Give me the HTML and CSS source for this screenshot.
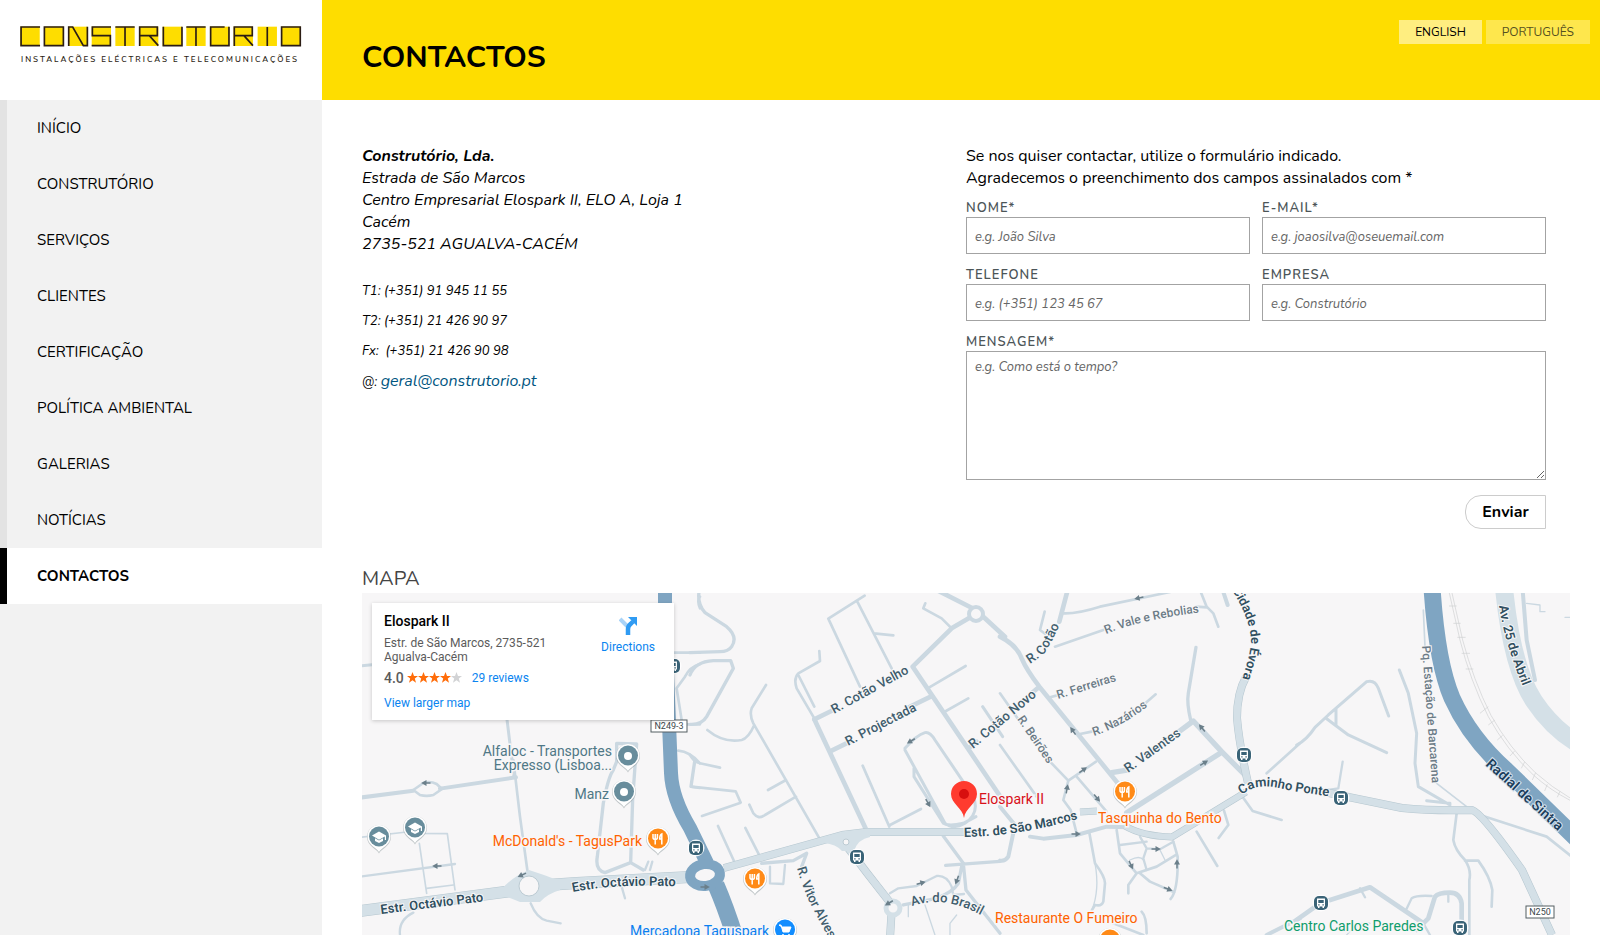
FILE: index.html
```html
<!DOCTYPE html>
<html lang="pt">
<head>
<meta charset="utf-8">
<title>Contactos - Construtório</title>
<link rel="stylesheet" href="styles.css">
</head>
<body>
<div class="page">
  <aside class="sidebar">
    <a class="brand" href="#" aria-label="Construtório">
      <svg class="brand-mark" viewBox="0 0 846 62" aria-hidden="true">
        <g fill="#fedd00">
          <rect x="1" y="2" width="58" height="58"/><rect x="72" y="2" width="58" height="58"/><rect x="144" y="2" width="58" height="58"/><rect x="215" y="2" width="58" height="58"/><rect x="286" y="2" width="58" height="58"/><rect x="357" y="2" width="58" height="58"/><rect x="428" y="2" width="58" height="58"/><rect x="499" y="2" width="58" height="58"/><rect x="570" y="2" width="58" height="58"/><rect x="641" y="2" width="58" height="58"/><rect x="713" y="2" width="58" height="58"/><rect x="784" y="2" width="58" height="58"/>
        </g>
        <g fill="none" stroke="#2b1d14" stroke-width="5">
          <path d="M60 3H3V59H60M73 3H130V59H73ZM146 60V3H158L190 59H202V2M273 3H217V29H271V59H215M286 3H344M315 3V60M359 60V3H412V29H359M388 29L415 59M430 2V59H486V2M499 3H557M528 3V60M614 3H572V59H627V2M643 60V3H697V29H643M672 29L699 59M742 3V60M785 3H841V59H785Z"/>
        </g>
      </svg>
      <span class="brand-line">INSTALAÇÕES ELÉCTRICAS E TELECOMUNICAÇÕES</span>
    </a>
    <nav class="menu">
      <a class="menu-item" href="#">INÍCIO</a>
      <a class="menu-item" href="#">CONSTRUTÓRIO</a>
      <a class="menu-item" href="#">SERVIÇOS</a>
      <a class="menu-item" href="#">CLIENTES</a>
      <a class="menu-item" href="#">CERTIFICAÇÃO</a>
      <a class="menu-item" href="#">POLÍTICA AMBIENTAL</a>
      <a class="menu-item" href="#">GALERIAS</a>
      <a class="menu-item" href="#">NOTÍCIAS</a>
      <a class="menu-item is-active" href="#" aria-current="page">CONTACTOS</a>
    </nav>
  </aside>

  <main class="main">
    <header class="banner">
      <h1 class="banner-title">CONTACTOS</h1>
      <nav class="langs">
        <a class="lang is-active" href="#">ENGLISH</a>
        <a class="lang" href="#">PORTUGUÊS</a>
      </nav>
    </header>

    <div class="content">
      <div class="columns">
        <address class="address">
          <p class="lines"><strong>Construtório, Lda.</strong><br>Estrada de São Marcos<br>Centro Empresarial Elospark II, ELO A, Loja 1<br>Cacém<br>2735-521 AGUALVA-CACÉM</p>
          <p class="phone">T1: (+351) 91 945 11 55</p>
          <p class="phone">T2: (+351) 21 426 90 97</p>
          <p class="phone">Fx: &nbsp;(+351) 21 426 90 98</p>
          <p class="phone">@: <a class="mail" href="#">geral@construtorio.pt</a></p>
        </address>

        <form class="form">
          <p class="lines">Se nos quiser contactar, utilize o formulário indicado.<br>Agradecemos o preenchimento dos campos assinalados com *</p>
          <div class="fields">
            <div class="field"><label class="label" for="nome">NOME*</label><input class="input" id="nome" type="text" placeholder="e.g. João Silva"></div>
            <div class="field"><label class="label" for="email">E-MAIL*</label><input class="input" id="email" type="email" placeholder="e.g. joaosilva@oseuemail.com"></div>
            <div class="field"><label class="label" for="tel">TELEFONE</label><input class="input" id="tel" type="tel" placeholder="e.g. (+351) 123 45 67"></div>
            <div class="field"><label class="label" for="empresa">EMPRESA</label><input class="input" id="empresa" type="text" placeholder="e.g. Construtório"></div>
            <div class="field field-wide"><label class="label" for="msg">MENSAGEM*</label><textarea class="input message" id="msg" placeholder="e.g. Como está o tempo?"></textarea></div>
          </div>
          <button class="send" type="button">Enviar</button>
        </form>
      </div>

      <h2 class="map-title">MAPA</h2>
      <section class="map" aria-label="Mapa">
        <svg class="map-canvas" viewBox="0 0 1208 342" preserveAspectRatio="xMidYMin slice">
          <defs>
            <symbol id="bus" viewBox="-9 -9 18 18" overflow="visible">
              <circle r="8.5" fill="#fff" opacity=".9"/><rect x="-7" y="-7" width="14" height="14" rx="5" fill="#3a6377"/>
              <path d="M-4-4.500H4V3.500H3V5H1.500V3.500H-1.500V5H-3V3.500H-4Z" fill="#fff"/><path d="M-2.700-3H2.700V0H-2.700Z" fill="#3a6377"/><path d="M-2.800 1.200h1.400v1.200h-1.400zM1.400 1.200h1.400v1.200h-1.400z" fill="#3a6377"/>
            </symbol>
            <symbol id="pin" viewBox="-13 -13 26 30" overflow="visible">
              <path d="M0 16.500C-2 12-12 9-12 0A12 12 0 0 1 12 0C12 9 2 12 0 16.500Z" fill="#8b979c" opacity=".5"/>
              <path d="M0 15C-2 11-11.500 8-11.500-.5A11.500 11.500 0 0 1 11.500-.5C11.500 8 2 11 0 15Z" fill="#fff"/>
              <circle r="10" cy="-.5" fill="currentColor"/>
            </symbol>
            <symbol id="fork" viewBox="-6 -6 12 12" overflow="visible">
              <path d="M-5-5V-1.500Q-5 .5-2.800.5Q-.6.500-.6-1.500V-5M-2.800-5V5.500M3.800 5.500V-5Q1.700-4 1.700 0H3.800" fill="none" stroke="#fff" stroke-width="1.500"/>
            </symbol>
            <symbol id="cap" viewBox="-7 -6 14 12" overflow="visible">
              <path d="M-7-1.500L0-5.500L7-1.500V3H5.800V-.5L0 2.700Z" fill="#fff"/><path d="M-4 1.300L0 3.500L4 1.300V4L0 6L-4 4Z" fill="#fff"/>
            </symbol>
            <symbol id="arrow" viewBox="-5 -4 10 8" overflow="visible">
              <path d="M-4.500 0H3" stroke="#6b7f8a" stroke-width="1.500"/><path d="M4.800 0L-.5-3V3Z" fill="#6b7f8a"/>
            </symbol>
            <path id="t1" d="M19 321L140 306"/><path id="t2" d="M211 299Q255 290 330 294"/>
            <path id="t3" d="M472 121L565 70"/><path id="t4" d="M486 153L575 107"/><path id="t5" d="M611 156L690 90"/>
            <path id="t6" d="M435 275Q441 297 451 316L480 370"/><path id="t7" d="M550 313Q588 300 632 330"/>
            <path id="t8" d="M602 244Q665 243 735 220"/><path id="t9" d="M668 71L681 62Q690 50 704 18"/>
            <path id="t10" d="M744 41Q785 24 860 17"/><path id="t11" d="M696 106L780 80"/><path id="t12" d="M732 143Q765 132 800 102"/>
            <path id="t13" d="M766 180L850 120"/><path id="t14" d="M655 126L700 192"/>
            <path id="t15" d="M870-3Q889 28 889 48Q889 62 876 98"/><path id="t16" d="M880 202Q895 188 925 197L990 207"/>
            <path id="t17" d="M1060 53L1071 205"/><path id="t18" d="M1137 13Q1143 55 1170 115"/><path id="t19" d="M1123 172L1220 260"/>
          </defs>
          <rect width="1208" height="342" fill="#f7f6f7"/>

          <!-- Minor streets -->
          <g class="street" transform="translate(-2 -33) scale(.3333)">
            <path class="w9" d="M440 470L462 650M0 318L36 314"/>
            <path class="w12" d="M0 713L160 692M240 686L468 652"/>
            <path class="w8" d="M160 690L190 669Q210 662 230 672L246 687L220 705Q200 710 180 705Z"/>
            <path class="w8" d="M460 600L480 770L502 930M940 278H1020M1020 312Q990 320 975 350L950 385L965 480"/>
            <path class="w8" d="M955 572Q990 575 1020 610M1003 605L992 680L1020 684M980 493H1020M1020 110Q1010 120 1020 145"/>
            <path class="w10" d="M770 605V550L830 552L825 620L818 720L812 908L735 938Q705 930 712 890L730 730Q745 650 760 630L770 605M812 908L850 930"/>
            <path class="w7" d="M865 905L855 930M877 905L870 930M785 980L795 1015"/>
            <path class="w5" d="M0 832L140 816M140 816L175 820L262 821L285 990M178 850L200 1000M200 985L280 975"/>
            <path class="w7" d="M0 950L285 912M160 1058Q115 1080 120 1125M512 1030Q530 1075 560 1082L602 1090"/>
          </g>
          <g class="street" transform="translate(328 -3) scale(.3333)">
            <path class="w10" d="M28 0Q20 40 45 68L110 110Q145 140 125 170Q115 185 90 185L0 188M0 255Q15 215 70 212H122L130 235L50 380Q35 405 0 403"/>
            <path class="w8" d="M228 285L185 355Q178 375 190 400L390 748M52 420Q100 460 155 450Q175 445 193 405M234 600L288 570M178 644L190 670Q205 690 225 675L318 620M0 495Q10 515 30 520L90 533M15 515L4 590L137 604L152 638L36 678M84 708L135 820M166 714L210 800"/>
            <path class="w8" d="M388 183L390 213L325 250Q310 265 320 295L373 385M325 255L373 350M415 86L524 17M415 86L510 290M502 35L605 235M552 130L610 136M706 40L700 55L755 85L785 115M718 292L827 228M768 363L835 325M518 527L598 710M600 705L693 657"/>
            <path class="w14" d="M373 388L528 718M740 0L858 60L945 140M858 72L785 115L668 230L938 630"/>
            <path class="w14" d="M373 388L430 360M425 482L480 455M650 355L722 320M835 475L860 455"/>
            <path class="w9" d="M645 475Q680 435 705 428Q720 425 735 450L850 620Q870 670 825 700Q790 720 765 700L645 480M672 535L672 560L760 700Q775 710 820 700L858 680M878 350L938 440"/>
            <path class="w10" d="M760 738L820 820L828 900L930 1030M767 826L930 814M815 830L805 880Q790 905 740 925L640 945"/>
            <path class="w7" d="M600 910L625 895L680 888L740 858Q770 855 785 890L790 915L822 912M240 880L280 882L285 825M240 830L240 880"/>
            <path class="w4" d="M655 945V980M705 945L735 1035M800 975L780 1000V1035"/>
            <path class="w10" d="M215 820L310 812L350 790L335 830"/>
          </g>
          <g class="street" transform="translate(638 -3) scale(.3333)">
            <path class="w14" d="M0 140Q50 165 65 205Q80 240 118 290L370 600M118 290L95 310M203 0L178 95"/>
            <path class="w8" d="M190 70Q230 72 300 50L510 6M134 65L120 120L140 135M165 170L310 120M600 0L620 50L640 70L655 110M590 50L620 52M150 322L180 314M240 432L275 425M430 345L467 313M0 310L60 395M150 515L205 572L190 630L212 660L230 730M205 572L288 515M230 560L320 665M0 465L110 620"/>
            <path class="w12" d="M668 0L683 45M0 650L45 705L25 800Q15 815 0 812M90 740L130 746L230 735L320 710L390 712"/>
            <path class="w10" d="M588 172L565 310Q560 340 572 390"/>
            <path class="w16" d="M335 548L385 540M530 430L580 393L665 485L740 560M380 668L665 487"/>
            <path class="w8" d="M800 550L900 460M720 610L758 663L845 690M672 662L685 705L656 744M590 725L652 828M268 728L285 820Q315 860 315 880L310 935Q305 950 285 945L275 962M350 720L360 790L385 820L410 850L385 885V910M410 850L470 830L528 795M520 755L533 800Q535 900 512 927M420 850L450 875L523 907M425 965Q440 980 440 1030M340 1000L430 1035"/>
            <path class="w7" d="M420 740L440 775L480 778L520 755M360 765L440 755M440 775L430 805L440 840"/>
            <path class="w4" d="M285 820Q300 900 275 962M390 810Q420 795 430 810M480 780L495 810"/>
            <path class="w12" d="M800 1035L900 985"/>
          </g>
          <g class="street" transform="translate(938 -3) scale(.3333)">
            <path class="w9" d="M-10 465Q20 450 45 412L85 375L200 275Q225 268 235 295L266 378M78 385L145 435L260 488M108 355L108 405M298 240L325 310L350 430L345 520L355 590L450 645M380 632L450 640"/>
            <path class="w7" d="M128 515L115 595L85 600"/>
            <path class="w5" d="M370 60L375 170M410 580L500 650"/>
            <path class="w8" d="M540 675L740 740L815 800M470 670L460 750Q465 780 495 810Q515 840 508 870V1035M495 812H535Q570 860 577 900L575 950"/>
            <path class="w14" d="M-10 990L60 940L210 892L370 1000M350 1020L385 985L405 920Q415 908 450 908Q480 908 485 940V1035"/>
            <path class="w7" d="M180 895L195 922M318 960L335 925Q350 915 395 918M445 915V935M370 1000L390 1035"/>
            <path class="w4" d="M140 1035Q180 990 210 1000M680 40L720 45V65H735M795 82H810"/>
            <path class="w12" d="M668 0L680 150L705 270"/>
          </g>

          <!-- Railway -->
          <g transform="translate(938 -3) scale(.3333)" fill="none" stroke="#cfd0d2" stroke-width="2">
            <path d="M446 0L480 150Q510 270 565 380Q620 480 700 555Q750 600 812 632M454 0L488 150Q520 270 573 376Q628 474 706 548Q755 592 812 625"/>
            <path d="M447 48H470M460 100H482M472 142H497M485 190H510M497 237H520M540 370L565 350M565 405L585 390M592 450L608 436M630 498L644 483M664 535L674 516M697 570L707 548M734 603L742 583M772 622L780 604"/>
          </g>

          <!-- Main roads -->
          <g fill="none" stroke-linejoin="round">
            <g stroke="#b5c6cf">
              <path stroke-width="12" d="M-2 318L150 298L170 293L215 290L328 284"/><path stroke-width="8" d="M362 275L480 242L505 239L610 239"/>
              <path stroke-width="8" d="M480 247L505 280L530 312L528 345"/><path stroke-width="7" d="M718 219L735 218M763 233Q780 243 810 244L884 199"/>
              <path stroke-width="8" d="M884 84Q875 100 875 125Q877 150 886 190"/><path stroke-width="8" d="M962 199L1040 215Q1070 218 1110 217Q1120 220 1160 277L1190 342"/>
            </g>
            <g stroke="#d4e0e7">
              <path stroke-width="11" d="M-2 318L150 298L170 293L215 290L328 284"/><path stroke-width="7" d="M362 275L480 242L505 239L610 239"/>
              <path stroke-width="7" d="M480 247L505 280L530 312L528 345"/><path stroke-width="6" d="M718 219L735 218M763 233Q780 243 810 244L884 199"/>
              <path stroke-width="7" d="M884 84Q875 100 875 125Q877 150 886 190"/><path stroke-width="7" d="M962 199L1040 215Q1070 218 1110 217Q1120 220 1160 277L1190 342"/>
              <path stroke-width="18" d="M1142-5Q1150 75 1172 108Q1190 135 1215 150"/>
            </g>
            <path fill="#d4e0e7" d="M140 296Q150 284 167 277Q183 282 198 288V297Q185 301 178 309H158Q148 305 140 302Z"/>
            <circle cx="167" cy="293" r="10" fill="#f7f6f7" stroke="#bccbd3"/>
            <path fill="#d4e0e7" d="M462 244L484 239L508 236V244Q496 246 492 258H480Q474 251 462 250Z"/>
            <circle cx="484" cy="249" r="3" fill="#f7f6f7" stroke="#bccbd3"/><circle cx="531" cy="315" r="7" fill="#f7f6f7" stroke="#d4e0e7" stroke-width="5"/>
            <circle cx="614" cy="21" r="7" fill="#f7f6f7" stroke="#cbd8e1" stroke-width="4"/>
            <g stroke="#7fa5c2">
              <path stroke-width="14" d="M303-5V30L309 180Q310 205 328 235L345 270"/>
              <path stroke-width="17" d="M354 292Q364 315 375 350"/>
              <path stroke-width="17" d="M1070-5Q1075 70 1090 105Q1108 145 1145 178L1218 249"/>
            </g>
            <ellipse cx="343" cy="282" rx="15" ry="11" fill="#f7f6f7" stroke="#7fa5c2" stroke-width="10" transform="rotate(-8 343 282)"/>
          </g>

          <!-- One-way markers -->
          <use href="#arrow" x="-5" y="-4" width="10" height="8" transform="translate(64 190) rotate(180)"/>
          <use href="#arrow" x="-5" y="-4" width="10" height="8" transform="translate(75 273) rotate(180)"/>
          <use href="#arrow" x="-5" y="-4" width="10" height="8" transform="translate(160 282) rotate(155)"/>
          <use href="#arrow" x="-5" y="-4" width="10" height="8" transform="translate(343 294)"/>
          <use href="#arrow" x="-5" y="-4" width="10" height="8" transform="translate(549 148) rotate(150)"/>
          <use href="#arrow" x="-5" y="-4" width="10" height="8" transform="translate(566 210) rotate(60)"/>
          <use href="#arrow" x="-5" y="-4" width="10" height="8" transform="translate(559 290) rotate(-15)"/>
          <use href="#arrow" x="-5" y="-4" width="10" height="8" transform="translate(595 287) rotate(110)"/>
          <use href="#arrow" x="-5" y="-4" width="10" height="8" transform="translate(527 310) rotate(150)"/>
          <use href="#arrow" x="-5" y="-4" width="10" height="8" transform="translate(777 5) rotate(168)"/>
          <use href="#arrow" x="-5" y="-4" width="10" height="8" transform="translate(711 138) rotate(-125)"/>
          <use href="#arrow" x="-5" y="-4" width="10" height="8" transform="translate(721 177) rotate(-35)"/>
          <use href="#arrow" x="-5" y="-4" width="10" height="8" transform="translate(705 196) rotate(-80)"/>
          <use href="#arrow" x="-5" y="-4" width="10" height="8" transform="translate(735 205) rotate(50)"/>
          <use href="#arrow" x="-5" y="-4" width="10" height="8" transform="translate(714 241)"/>
          <use href="#arrow" x="-5" y="-4" width="10" height="8" transform="translate(840 135) rotate(-130)"/>
          <use href="#arrow" x="-5" y="-4" width="10" height="8" transform="translate(842 170) rotate(-32)"/>
          <use href="#arrow" x="-5" y="-4" width="10" height="8" transform="translate(794 256)"/>
          <use href="#arrow" x="-5" y="-4" width="10" height="8" transform="translate(769 272) rotate(65)"/>
          <use href="#arrow" x="-5" y="-4" width="10" height="8" transform="translate(815 271) rotate(-90)"/>
          <use href="#arrow" x="-5" y="-4" width="10" height="8" transform="translate(806 296) rotate(20)"/>

          <!-- Street names -->
          <g class="road-name">
            <text class="strong"><textPath href="#t1">Estr. Octávio Pato</textPath></text>
            <text class="strong"><textPath href="#t2">Estr. Octávio Pato</textPath></text>
            <text><textPath href="#t3">R. Cotão Velho</textPath></text>
            <text><textPath href="#t4">R. Projectada</textPath></text>
            <text><textPath href="#t5">R. Cotão Novo</textPath></text>
            <text><textPath href="#t6">R. Vitor Alves</textPath></text>
            <text><textPath href="#t7">Av. do Brasil</textPath></text>
            <text class="strong"><textPath href="#t8">Estr. de São Marcos</textPath></text>
            <text><textPath href="#t9">R. Cotão</textPath></text>
            <text class="light"><textPath href="#t10">R. Vale e Rebolias</textPath></text>
            <text class="light"><textPath href="#t11">R. Ferreiras</textPath></text>
            <text class="light"><textPath href="#t12">R. Nazários</textPath></text>
            <text><textPath href="#t13">R. Valentes</textPath></text>
            <text class="light"><textPath href="#t14">R. Beirões</textPath></text>
            <text class="strong"><textPath href="#t15">Cidade de Évora</textPath></text>
            <text class="strong"><textPath href="#t16">Caminho Ponte</textPath></text>
            <text class="light"><textPath href="#t17">Pq. Estação de Barcarena</textPath></text>
            <text class="strong"><textPath href="#t18">Av. 25 de Abril</textPath></text>
            <text class="navy"><textPath href="#t19">Radial de Sintra</textPath></text>
          </g>

          <!-- Road shields -->
          <g class="shield">
            <rect x="289" y="127" width="36" height="12"/><text x="307" y="136">N249-3</text>
            <rect x="1164" y="313" width="28" height="12"/><text x="1178" y="322">N250</text>
          </g>

          <!-- Stops -->
          <use href="#bus" x="302" y="64" width="18" height="18"/>
          <use href="#bus" x="325" y="246" width="18" height="18"/>
          <use href="#bus" x="486" y="255" width="18" height="18"/>
          <use href="#bus" x="873" y="153" width="18" height="18"/>
          <use href="#bus" x="970" y="196" width="18" height="18"/>
          <use href="#bus" x="950" y="301" width="18" height="18"/>
          <use href="#bus" x="1089" y="326" width="18" height="18"/>

          <!-- Places -->
          <g color="#688d9c">
            <use href="#pin" x="253" y="150" width="26" height="30"/><circle cx="266" cy="163" r="4" fill="#fff"/>
            <use href="#pin" x="249" y="186" width="26" height="30"/><circle cx="262" cy="199" r="4" fill="#fff"/>
            <use href="#pin" x="40" y="222" width="26" height="30"/><use href="#cap" x="46" y="229" width="14" height="12"/>
            <use href="#pin" x="4" y="231" width="26" height="30"/><use href="#cap" x="10" y="238" width="14" height="12"/>
          </g>
          <g color="#ff8a17">
            <use href="#pin" x="283" y="233" width="26" height="30"/><use href="#fork" x="290" y="240" width="12" height="12"/>
            <use href="#pin" x="380" y="273" width="26" height="30"/><use href="#fork" x="387" y="280" width="12" height="12"/>
            <use href="#pin" x="750" y="186" width="26" height="30"/><use href="#fork" x="757" y="193" width="12" height="12"/>
            <use href="#pin" x="735" y="334" width="26" height="30"/>
          </g>
          <g color="#128dff">
            <use href="#pin" x="410" y="324" width="26" height="30"/>
            <path d="M417 332H419L421 339H427L429 334H420Z" fill="#fff" stroke="#fff"/><circle cx="421" cy="342" r="1" fill="#fff"/><circle cx="427" cy="342" r="1" fill="#fff"/>
          </g>
          <path d="M602 225C601 215 589 211 589 201A13 13 0 0 1 615 201C615 211 603 215 602 225Z" fill="#ff3b2f"/><circle cx="602" cy="201" r="5" fill="#d80f0f"/>
          <g class="place">
            <g fill="#4f7886"><text class="end" x="250" y="163">Alfaloc - Transportes</text><text class="end" x="250" y="177">Expresso (Lisboa...</text><text class="end" x="247" y="206">Manz</text></g>
            <g fill="#ff6200"><text class="end" x="280" y="253">McDonald's - TagusPark</text><text x="736" y="230">Tasquinha do Bento</text><text x="633" y="330">Restaurante O Fumeiro</text></g>
            <text fill="#0b80f0" class="end" x="407" y="343">Mercadona Taguspark</text>
            <text fill="#d8101a" x="617" y="211">Elospark II</text>
            <text fill="#0f9d6c" x="922" y="338">Centro Carlos Paredes</text>
          </g>
        </svg>

        <div class="card">
          <div class="card-info">
            <h3 class="card-title">Elospark II</h3>
            <p class="card-address">Estr. de São Marcos, 2735-521<br>Agualva-Cacém</p>
            <div class="rating">
              <span class="score">4.0</span>
              <svg class="stars" viewBox="0 0 55 11" aria-hidden="true">
                <path fill="#ff6d0a" d="M5.500 0L7 4H11L7.800 6.500L9 10.800L5.500 8.300L2 10.800L3.200 6.500L0 4H4ZM16.500 0L18 4H22L18.800 6.500L20 10.800L16.500 8.300L13 10.800L14.200 6.500L11 4H15ZM27.500 0L29 4H33L29.800 6.500L31 10.800L27.500 8.300L24 10.800L25.200 6.500L22 4H26ZM38.500 0L40 4H44L40.800 6.500L42 10.800L38.500 8.300L35 10.800L36.200 6.500L33 4H37Z"/>
                <path fill="#d2d3d5" d="M49.500 0L51 4H55L51.800 6.500L53 10.800L49.500 8.300L46 10.800L47.200 6.500L44 4H48Z"/>
              </svg>
              <a class="card-link" href="#">29 reviews</a>
            </div>
            <a class="card-link" href="#">View larger map</a>
          </div>
          <a class="directions" href="#">
            <svg class="directions-icon" viewBox="0 0 18 18" aria-hidden="true"><path d="M1 2L8 9" stroke="#a9d3f7" stroke-width="4"/><path d="M9 18V12Q9 9 11.500 7L14 4.500" fill="none" stroke="#2f9bf3" stroke-width="4.500"/><path d="M9 0H18V9Z" fill="#2f9bf3"/></svg>
            Directions
          </a>
        </div>
      </section>
    </div>
  </main>
</div>
</body>
</html>
```
FILE: styles.css
```css
* {
  box-sizing: border-box;
}

body {
  margin: 0;
  color: #000;
  background: #fff;
  font-family: Nunito, Lato, "Open Sans", sans-serif;
  font-size: 16px;
  line-height: 22px;
}

h1,
h2,
h3,
p {
  margin: 0;
}

a {
  text-decoration: none;
}

.page {
  display: flex;
  height: 100vh;
  overflow: hidden;
}

.sidebar {
  flex: 0 0 322px;
  background: #f2f2f2;
}

.brand {
  display: block;
  height: 100px;
  padding: 26px 20px 0;
  background: #fff;
  color: #2b1d14;
}

.brand-mark {
  display: block;
  width: 100%;
}

.brand-line {
  display: block;
  padding-left: 1px;
  margin-top: 6px;
  font-size: 8px;
  font-weight: 600;
  line-height: 14px;
  letter-spacing: 2px;
  white-space: nowrap;
}

.menu {
  display: flex;
  flex-direction: column;
}

.menu-item {
  height: 56px;
  padding-left: 30px;
  border-left: 7px solid #e3e3e3;
  color: #000;
  font-size: 15px;
  line-height: 56px;
}

.menu-item.is-active {
  border-color: #000;
  background: #fff;
  font-weight: 700;
}

.main {
  display: flex;
  flex: 1;
  flex-direction: column;
  min-width: 0;
}

.banner {
  display: flex;
  justify-content: space-between;
  align-items: flex-start;
  height: 100px;
  padding: 20px 10px 0 40px;
  background: #fedd00;
}

.banner-title {
  padding-top: 18px;
  font-size: 30px;
  font-weight: 700;
  line-height: 40px;
}

.langs {
  display: flex;
  gap: 4px;
}

.lang {
  padding: 0 16px;
  background: rgba(255, 255, 255, 0.3);
  color: #55501f;
  font-size: 12px;
  line-height: 24px;
}

.lang.is-active {
  background: rgba(255, 255, 255, 0.5);
  color: #000;
}

.content {
  display: flex;
  flex: 1;
  flex-direction: column;
  min-height: 0;
  padding: 45px 30px 0 40px;
}

.columns {
  display: grid;
  grid-template-columns: 1fr 1fr;
}

.address .lines {
  margin-bottom: 21px;
}

.phone {
  font-size: 13px;
  line-height: 30px;
}

.mail {
  color: #00557f;
  font-size: 16px;
}

.form {
  display: flex;
  flex-direction: column;
  padding-right: 24px;
}

.fields {
  display: grid;
  grid-template-columns: 1fr 1fr;
  gap: 12px;
  margin-top: 10px;
}

.field {
  display: flex;
  flex-direction: column;
}

.field-wide {
  grid-column: 1 / -1;
}

.label {
  color: #4c5558;
  font-size: 13px;
  font-weight: 600;
  line-height: 18px;
  letter-spacing: 1px;
}

.input {
  width: 100%;
  height: 37px;
  padding: 2px 8px 0;
  border: 1px solid #a3a3a3;
  border-radius: 0;
  background: #fff;
  font: 13px/18px Nunito, Lato, "Open Sans", sans-serif;
}

.input::placeholder {
  color: #666;
  font-style: italic;
}

.message {
  height: 129px;
  padding-top: 6px;
}

.send {
  align-self: flex-end;
  width: 81px;
  height: 34px;
  margin-top: 15px;
  border: 1px solid #ccc;
  border-radius: 16px 0 0 16px;
  background: #fff;
  color: #000;
  font: 700 16px/22px Nunito, Lato, "Open Sans", sans-serif;
}

.map-title {
  margin-top: 36px;
  color: #444;
  font-size: 20px;
  font-weight: 400;
  line-height: 28px;
}

.map {
  position: relative;
  flex: 1;
  min-height: 0;
  overflow: hidden;
  font-family: Roboto, sans-serif;
}

.map-canvas {
  display: block;
  width: 100%;
  height: 100%;
}

.street {
  fill: none;
  stroke: #cbd8e1;
  stroke-linecap: round;
  stroke-linejoin: round;
}

.w4 { stroke-width: 4px; }
.w5 { stroke-width: 5px; }
.w7 { stroke-width: 7px; }
.w8 { stroke-width: 8px; }
.w9 { stroke-width: 9px; }
.w10 { stroke-width: 10px; }
.w12 { stroke-width: 12px; }
.w14 { stroke-width: 14px; }
.w16 { stroke-width: 16px; }

.road-name text {
  fill: #405d6d;
  stroke: #f7f6f7;
  stroke-width: 2px;
  paint-order: stroke;
  font-size: 13px;
  font-weight: 500;
}

.road-name .strong {
  fill: #304f5f;
  font-weight: 600;
}

.road-name .light {
  fill: #6b7b86;
  font-size: 12px;
}

.road-name .navy {
  fill: #1d3f5d;
  stroke: #d5e3ee;
  font-size: 14px;
  font-weight: 600;
}

.shield rect {
  fill: #fff;
  stroke: #555f63;
  stroke-width: 1px;
}

.shield text {
  fill: #3c474c;
  font-size: 9px;
  text-anchor: middle;
}

.place text {
  stroke: #f7f6f7;
  stroke-width: 3px;
  paint-order: stroke;
  font-size: 14px;
}

.place .end {
  text-anchor: end;
}

.card {
  position: absolute;
  top: 10px;
  left: 10px;
  display: flex;
  justify-content: space-between;
  width: 302px;
  padding: 9px 19px 5px 12px;
  background: #fff;
  box-shadow: 0 1px 4px rgba(0, 0, 0, 0.2);
  color: #5b5b5b;
  font-size: 12px;
  line-height: 14px;
}

.card-title {
  color: #000;
  font-size: 14px;
  font-weight: 500;
  line-height: 18px;
}

.card-address {
  margin-top: 6px;
}

.rating {
  display: flex;
  align-items: center;
  height: 27px;
}

.score {
  font-size: 14px;
  font-weight: 500;
}

.stars {
  width: 55px;
  height: 11px;
  margin: 0 10px 0 3px;
}

.card-link {
  color: #0a84f0;
  line-height: 24px;
}

.directions {
  display: flex;
  flex-direction: column;
  align-items: center;
  align-self: flex-start;
  gap: 5px;
  padding-top: 5px;
  color: #0a84f0;
}

.directions-icon {
  width: 18px;
  height: 18px;
}
```
